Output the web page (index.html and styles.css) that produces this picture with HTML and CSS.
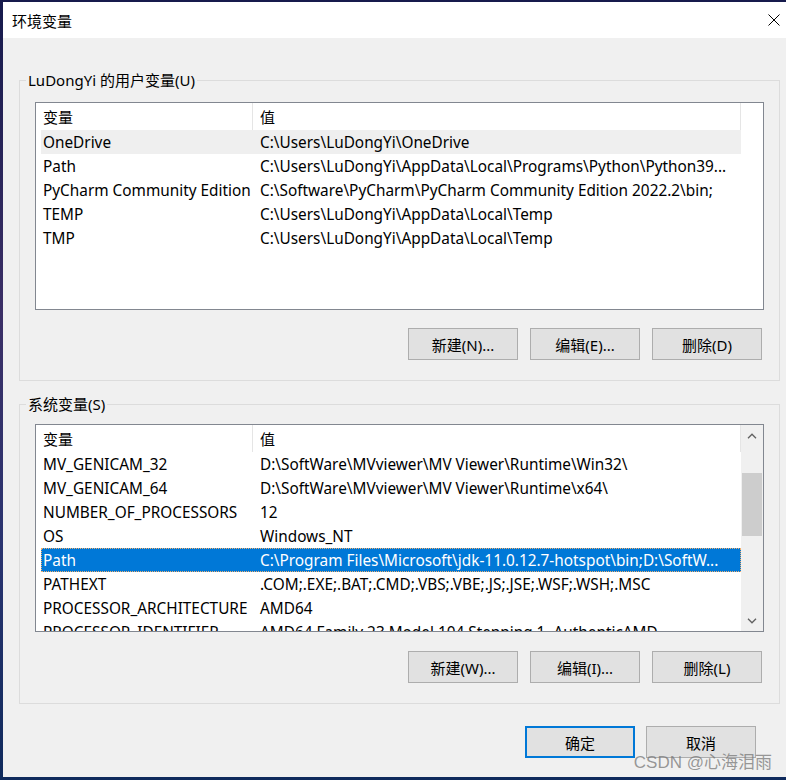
FILE: index.html
```html
<!DOCTYPE html>
<html lang="zh">
<head>
<meta charset="utf-8">
<title>环境变量</title>
<link rel="stylesheet" href="styles.css">
</head>
<body>
<div class="window">
  <div class="titlebar">
    <span class="title">环境变量</span>
    <svg class="close" width="12" height="12" viewBox="0 0 12 12"><path d="M0.5 0.5 L11.5 11.5 M11.5 0.5 L0.5 11.5" stroke="#000" stroke-width="1" fill="none"/></svg>
  </div>
  <div class="content">
    <fieldset class="group group-user">
      <legend>LuDongYi 的用户变量(U)</legend>
      <div class="inner">
        <div class="list">
          <div class="list-body">
            <div class="hdr"><div class="c1">变量</div><div class="c2">值</div></div>
            <div class="row hover"><div class="c1">OneDrive</div><div class="c2">C:\Users\LuDongYi\OneDrive</div></div>
            <div class="row"><div class="c1">Path</div><div class="c2">C:\Users\LuDongYi\AppData\Local\Programs\Python\Python39...</div></div>
            <div class="row"><div class="c1">PyCharm Community Edition</div><div class="c2">C:\Software\PyCharm\PyCharm Community Edition 2022.2\bin;</div></div>
            <div class="row"><div class="c1">TEMP</div><div class="c2">C:\Users\LuDongYi\AppData\Local\Temp</div></div>
            <div class="row"><div class="c1">TMP</div><div class="c2">C:\Users\LuDongYi\AppData\Local\Temp</div></div>
          </div>
          <div class="spacer"></div>
        </div>
        <div class="btns">
          <button class="btn">新建(N)...</button>
          <button class="btn">编辑(E)...</button>
          <button class="btn">删除(D)</button>
        </div>
      </div>
    </fieldset>
    <fieldset class="group group-sys">
      <legend>系统变量(S)</legend>
      <div class="inner inner-sys">
        <div class="list">
          <div class="list-body">
            <div class="hdr"><div class="c1">变量</div><div class="c2">值</div></div>
            <div class="row"><div class="c1">MV_GENICAM_32</div><div class="c2">D:\SoftWare\MVviewer\MV Viewer\Runtime\Win32\</div></div>
            <div class="row"><div class="c1">MV_GENICAM_64</div><div class="c2">D:\SoftWare\MVviewer\MV Viewer\Runtime\x64\</div></div>
            <div class="row"><div class="c1">NUMBER_OF_PROCESSORS</div><div class="c2">12</div></div>
            <div class="row"><div class="c1">OS</div><div class="c2">Windows_NT</div></div>
            <div class="row selected"><div class="c1">Path</div><div class="c2">C:\Program Files\Microsoft\jdk-11.0.12.7-hotspot\bin;D:\SoftW...</div></div>
            <div class="row"><div class="c1">PATHEXT</div><div class="c2">.COM;.EXE;.BAT;.CMD;.VBS;.VBE;.JS;.JSE;.WSF;.WSH;.MSC</div></div>
            <div class="row"><div class="c1">PROCESSOR_ARCHITECTURE</div><div class="c2">AMD64</div></div>
            <div class="row"><div class="c1">PROCESSOR_IDENTIFIER</div><div class="c2">AMD64 Family 23 Model 104 Stepping 1, AuthenticAMD</div></div>
          </div>
          <div class="scrollbar">
            <div class="arrow">
              <svg width="10" height="6" viewBox="0 0 10 6"><path d="M1 5.2 L5 1.2 L9 5.2" stroke="#606060" stroke-width="1.3" fill="none"/></svg>
            </div>
            <div class="track"><div class="thumb"></div></div>
            <div class="arrow">
              <svg width="10" height="6" viewBox="0 0 10 6"><path d="M1 0.8 L5 4.8 L9 0.8" stroke="#606060" stroke-width="1.3" fill="none"/></svg>
            </div>
          </div>
        </div>
        <div class="btns btns-sys">
          <button class="btn">新建(W)...</button>
          <button class="btn">编辑(I)...</button>
          <button class="btn">删除(L)</button>
        </div>
      </div>
    </fieldset>
    <div class="footer">
      <button class="btn btn-default">确定</button>
      <button class="btn">取消</button>
    </div>
  </div>
  <div class="watermark">CSDN @心海泪雨</div>
</div>
</body>
</html>
```

FILE: styles.css
```css
html, body {
  margin: 0;
  padding: 0;
}
body {
  width: 786px;
  height: 780px;
  overflow: hidden;
  background: linear-gradient(180deg, #161a4c 0%, #3b2f66 40%, #2a3470 70%, #0f2a5c 100%);
  font-family: "Noto Sans", "Noto Sans CJK SC", sans-serif;
  font-size: 15px;
  color: #000;
}
.window {
  position: relative;
  margin: 2px 0 0 3px;
  width: 783px;
  height: 775px;
  display: flex;
  flex-direction: column;
  background: #f0f0f0;
}
.titlebar {
  height: 36px;
  flex: none;
  background: #fff;
  display: flex;
  align-items: center;
  justify-content: space-between;
  padding: 0 6px 0 9px;
  box-sizing: border-box;
}
.title {
  font-size: 15px;
  line-height: 20px;
  padding-top: 1px;
}
.close {
  display: block;
}
.content {
  flex: 1;
  display: flex;
  flex-direction: column;
}
.group {
  margin: 32px 6px 0 16px;
  border: 1px solid #dcdcdc;
  padding: 0 15px 20px 6px;
  min-width: 0;
}
.group-sys {
  margin-top: 13px;
}
.group legend {
  padding: 0 2px;
  font-size: 15px;
  line-height: 20px;
  margin-left: 0;
}
.inner {
  margin-left: 9px;
  padding-top: 12px;
}
.inner-sys {
  padding-top: 10px;
}
.list {
  height: 208px;
  box-sizing: border-box;
  border: 1px solid #828790;
  background: #fff;
  display: flex;
  overflow: hidden;
  font-size: 15.35px;
}
.list-body {
  width: 700px;
  margin-left: 5px;
  overflow: hidden;
}
.spacer {
  flex: 1;
}
.hdr, .row {
  display: grid;
  grid-template-columns: 212px 488px;
  white-space: nowrap;
}
.hdr {
  height: 27px;
  line-height: 28px;
  font-size: 15px;
}
.hdr .c1, .hdr .c2 {
  border-right: 1px solid #e5e5e5;
}
.row {
  height: 24px;
  line-height: 24px;
}
.c1 {
  padding-left: 2px;
  overflow: hidden;
}
.c2 {
  padding-left: 7px;
  overflow: hidden;
}
.row.hover {
  background: #efefef;
}
.row.selected {
  background: #0078d7;
  color: #fff;
  outline: 1px dotted #f0b070;
  outline-offset: -1px;
}
.scrollbar {
  flex: 1;
  background: #f0f0f0;
  display: flex;
  flex-direction: column;
}
.arrow {
  height: 21px;
  display: flex;
  align-items: center;
  justify-content: center;
  padding-right: 1px;
}
.track {
  flex: 1;
  padding-top: 27px;
}
.thumb {
  height: 63px;
  margin: 0 1px 0 1px;
  background: #cdcdcd;
}
.btns {
  display: flex;
  justify-content: flex-end;
  gap: 12px;
  margin-top: 18px;
  padding-right: 2px;
}
.btns-sys {
  margin-top: 19px;
}
.btn {
  width: 110px;
  height: 32px;
  box-sizing: border-box;
  border: 1px solid #adadad;
  background: #e1e1e1;
  font-family: "Noto Sans", "Noto Sans CJK SC", sans-serif;
  font-size: 15px;
  color: #000;
  padding: 0;
  margin: 0;
}
.btn-default {
  border: 2px solid #0078d7;
}
.footer {
  display: flex;
  justify-content: flex-end;
  gap: 11px;
  margin-top: 22px;
  padding-right: 30px;
}
.watermark {
  position: absolute;
  right: 14px;
  bottom: 3px;
  font-size: 17px;
  line-height: 22px;
  color: rgba(120, 120, 120, 0.75);
  font-family: "Liberation Sans", "Noto Sans CJK SC", sans-serif;
}
```
